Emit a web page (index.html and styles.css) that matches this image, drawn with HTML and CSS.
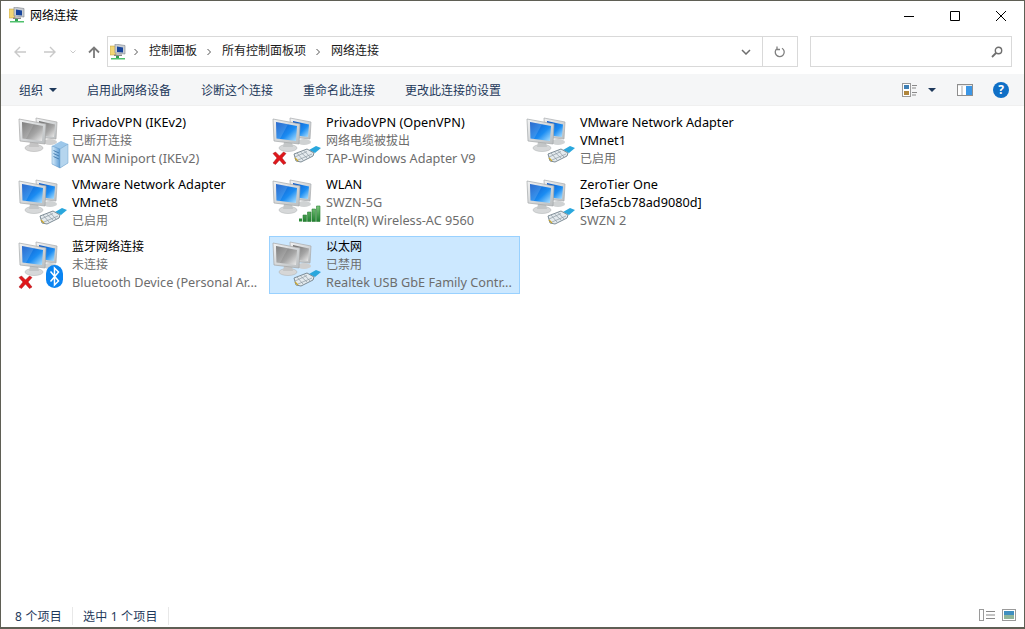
FILE: index.html
```html
<!DOCTYPE html>
<html lang="zh-CN">
<head>
    <meta charset="UTF-8">
    <title>网络连接</title>
    <link rel="stylesheet" href="styles.css">
</head>
<body>
    <svg class="icon-defs" aria-hidden="true">
        <defs>
            <linearGradient id="screen-blue" x1="0" y1="0" x2="1" y2="1">
                <stop offset="0" stop-color="#0a52c4"/>
                <stop offset="0.6" stop-color="#1b8cf2"/>
                <stop offset="1" stop-color="#b4e4ff"/>
            </linearGradient>
            <linearGradient id="screen-grey" x1="0" y1="0" x2="1" y2="1">
                <stop offset="0" stop-color="#6a6a6a"/>
                <stop offset="0.6" stop-color="#a5a5a5"/>
                <stop offset="1" stop-color="#eeeeee"/>
            </linearGradient>
            <linearGradient id="frame" x1="0" y1="0" x2="1" y2="1">
                <stop offset="0" stop-color="#f2f3f4"/>
                <stop offset="1" stop-color="#b9bdbf"/>
            </linearGradient>
            <linearGradient id="server-side" x1="0" y1="0" x2="1" y2="0">
                <stop offset="0" stop-color="#d8ecfb"/>
                <stop offset="1" stop-color="#5f9ed6"/>
            </linearGradient>
            <linearGradient id="signal" x1="0" y1="0" x2="0" y2="1">
                <stop offset="0" stop-color="#7cc77c"/>
                <stop offset="1" stop-color="#1f7f2f"/>
            </linearGradient>
        </defs>
        <symbol id="monitors-blue" viewBox="0 0 57 58">
            <ellipse cx="35" cy="30" rx="7" ry="3" fill="#cfd2d3"/>
            <path d="M21 6 42 10 41 27 22 25Z" fill="url(#frame)" stroke="#a7abad" stroke-width=".7"/>
            <path d="M24 9 40 12.500 39 25 24 23Z" fill="url(#screen-blue)"/>
            <ellipse cx="19" cy="36" rx="9" ry="3.500" fill="#d6d8d9" stroke="#b4b7b8" stroke-width=".6"/>
            <path d="M15 30h8l1 5H14Z" fill="#c3c6c7"/>
            <path d="M4 7 31 12 30 32 5 29Z" fill="url(#frame)" stroke="#a3a7a9" stroke-width=".7"/>
            <path d="M7 10 28 14 27 29 7.500 26.500Z" fill="url(#screen-blue)"/>
            <path d="M7 10 19 12.200 11 27 7.500 26.500Z" fill="#fff" opacity=".14"/>
        </symbol>
        <symbol id="monitors-grey" viewBox="0 0 57 58">
            <ellipse cx="35" cy="30" rx="7" ry="3" fill="#cfcfcf"/>
            <path d="M21 6 42 10 41 27 22 25Z" fill="url(#frame)" stroke="#a9a9a9" stroke-width=".7"/>
            <path d="M24 9 40 12.500 39 25 24 23Z" fill="url(#screen-grey)"/>
            <ellipse cx="19" cy="36" rx="9" ry="3.500" fill="#d6d6d6" stroke="#b4b4b4" stroke-width=".6"/>
            <path d="M15 30h8l1 5H14Z" fill="#c4c4c4"/>
            <path d="M4 7 31 12 30 32 5 29Z" fill="url(#frame)" stroke="#a5a5a5" stroke-width=".7"/>
            <path d="M7 10 28 14 27 29 7.500 26.500Z" fill="url(#screen-grey)"/>
            <path d="M7 10 19 12.200 11 27 7.500 26.500Z" fill="#fff" opacity=".14"/>
        </symbol>
        <symbol id="badge-cable" viewBox="0 0 57 58">
            <path d="M40 38 47 34 52 36 46 41Z" fill="#2aa7dd"/>
            <path d="M25 42 38 37 45 41 44 44 32 50 27 49Z" fill="#e4eaee" stroke="#71808a" stroke-width=".9"/>
            <path d="M28 41 34 48M31.500 40 38 46M35 38.500 41 45M26 45 38 39.500M29 48 43 42" stroke="#8d9aa2" stroke-width=".7" fill="none"/>
            <path d="M26 46 29 49" stroke="#c9a52e" stroke-width="1.200"/>
        </symbol>
        <symbol id="badge-server" viewBox="0 0 57 58">
            <path d="M37 34 46 29 53 32 53 51 45 56 37 52Z" fill="#9cc7ea"/>
            <path d="M37 34 45 37 45 56 37 52Z" fill="url(#server-side)" stroke="#5e94c4" stroke-width=".5"/>
            <path d="M45 37 53 32 53 51 45 56Z" fill="#b5d5ee" stroke="#6ea0cb" stroke-width=".5"/>
            <path d="M38.500 38.500 44 41M38.500 41.500 44 44M38.500 44.500 44 47" stroke="#3c75aa" stroke-width=".9"/>
        </symbol>
        <symbol id="badge-signal" viewBox="0 0 57 58">
            <path d="M30 47.500V44.500H33V47.500Z" fill="#2b8a38"/>
            <path d="M34 47.500V41H37.500V47.500ZM38.500 47.500V38H42V47.500ZM43 47.500V35H46.500V47.500ZM47.500 47.500V32H51V47.500Z" fill="url(#signal)" stroke="#2b7f36" stroke-width=".6"/>
        </symbol>
        <symbol id="badge-error" viewBox="0 0 57 58">
            <path d="M4 41.500 6.500 40 10.500 44 14.500 40 17 41.500 13 46 17 51 14.500 52.500 10.500 48 6.500 52.500 4 51 8 46Z" fill="#e0171b" stroke="#a51216" stroke-width=".5"/>
        </symbol>
        <symbol id="badge-bluetooth" viewBox="0 0 57 58">
            <rect x="31" y="29" width="17" height="23" rx="8.500" fill="#0a84f2"/>
            <path d="M35.500 35.500 43.500 45 39.500 49V32L43.500 36 35.500 45.500" fill="none" stroke="#fff" stroke-width="1.500"/>
        </symbol>
        <symbol id="network-small" viewBox="0 0 16 16">
            <path d="M0 2h5l1 1v8H0Z" fill="#f2d675" stroke="#b99a3a" stroke-width=".5"/>
            <path d="M5 0 15 1.500V10L5 9Z" fill="#c9cdd2" stroke="#7d8389" stroke-width=".6"/>
            <path d="M7 2.500 13 3.500V8.500L7 8Z" fill="#17449b"/>
            <path d="M4 10.500h8v1.500H4Z" fill="#888"/>
            <path d="M6 12h3v2H6Z" fill="#2f9e4f"/>
            <path d="M1 14h14v1.500H1Z" fill="#4fc06c"/>
        </symbol>
    </svg>

    <div class="window">
        <div class="title-bar">
            <svg class="small-icon"><use href="#network-small"/></svg>
            <span class="title-text">网络连接</span>
            <div class="window-buttons">
                <svg class="win-btn" viewBox="0 0 46 32"><path d="M18 15.500h10" stroke="#000" fill="none"/></svg>
                <svg class="win-btn" viewBox="0 0 46 32"><path d="M18.500 10.500h9v9h-9Z" stroke="#000" fill="none"/></svg>
                <svg class="win-btn" viewBox="0 0 46 32"><path d="M18 10l10 10M28 10 18 20" stroke="#000" fill="none"/></svg>
            </div>
        </div>

        <div class="nav-bar">
            <div class="nav-buttons">
                <svg class="nav-arrow" viewBox="0 0 12 12"><path d="M6 1 1 6l5 5M1 6h11" stroke="#c9c9c9" stroke-width="1.400" fill="none"/></svg>
                <svg class="nav-arrow" viewBox="0 0 12 12"><path d="M6 1l5 5-5 5M11 6H0" stroke="#c9c9c9" stroke-width="1.400" fill="none"/></svg>
                <svg class="nav-chevron" viewBox="0 0 6 4"><path d="M.5.500 3 3 5.500.5" stroke="#c9c9c9" fill="none"/></svg>
                <svg class="nav-up" viewBox="0 0 12 12"><path d="M1 6.500 6 1.500l5 5M6 1.500V12" stroke="#7a7a7a" stroke-width="1.800" fill="none"/></svg>
            </div>
            <div class="address-box">
                <svg class="small-icon"><use href="#network-small"/></svg>
                <svg class="crumb-arrow first-arrow" viewBox="0 0 4 8"><path d="M.5 1 3.500 4 .5 7" stroke="#555" fill="none"/></svg>
                <span class="crumb">控制面板</span>
                <svg class="crumb-arrow" viewBox="0 0 4 8"><path d="M.5 1 3.500 4 .5 7" stroke="#555" fill="none"/></svg>
                <span class="crumb">所有控制面板项</span>
                <svg class="crumb-arrow" viewBox="0 0 4 8"><path d="M.5 1 3.500 4 .5 7" stroke="#555" fill="none"/></svg>
                <span class="crumb">网络连接</span>
                <span class="address-spacer"></span>
                <svg class="address-drop" viewBox="0 0 10 6"><path d="M1 1l4 4 4-4" stroke="#6e6e6e" stroke-width="1.500" fill="none"/></svg>
                <div class="address-refresh">
                    <svg class="refresh-icon" viewBox="0 0 12 12"><path d="M3 2.500A4.500 4.500 0 1 0 8 2.200M3 .500V3.500H6" stroke="#808080" stroke-width="1.300" fill="none"/></svg>
                </div>
            </div>
            <div class="search-box">
                <svg class="search-icon" viewBox="0 0 12 12"><circle cx="7.500" cy="4.500" r="3.200" stroke="#6e6e6e" stroke-width="1.400" fill="none"/><path d="M5 7 1 11" stroke="#6e6e6e" stroke-width="1.800"/></svg>
            </div>
        </div>

        <div class="toolbar">
            <span class="tool tool-menu">组织<i class="caret"></i></span>
            <span class="tool">启用此网络设备</span>
            <span class="tool">诊断这个连接</span>
            <span class="tool">重命名此连接</span>
            <span class="tool">更改此连接的设置</span>
            <span class="toolbar-spacer"></span>
            <svg class="view-icon" viewBox="0 0 16 14">
                <rect x=".5" y=".5" width="8" height="13" fill="#fff" stroke="#9a9a9a"/>
                <rect x="2" y="2" width="5" height="4" fill="#3f7fb5"/>
                <rect x="2" y="8" width="5" height="4" fill="#b0863c"/>
                <path d="M10 2.500h5M10 5h4M10 9.500h5M10 12h4" stroke="#8a8a8a"/>
            </svg>
            <i class="caret view-caret"></i>
            <svg class="pane-icon" viewBox="0 0 16 12">
                <rect x=".5" y=".5" width="15" height="11" fill="#e8e8e8" stroke="#8e8e8e"/>
                <rect x="1" y="2" width="14" height="9" fill="#fff"/>
                <rect x="9" y="2" width="6" height="9" fill="#3b96e6"/>
                <path d="M5 2v9" stroke="#a9a9a9"/>
            </svg>
            <span class="help-icon">?</span>
        </div>

        <div class="content">
            <div class="item">
                <svg class="item-icon"><use href="#monitors-grey"/><use href="#badge-server"/></svg>
                <div class="item-text">
                    <div class="item-name latin">PrivadoVPN (IKEv2)</div>
                    <div class="item-info">已断开连接</div>
                    <div class="item-info latin">WAN Miniport (IKEv2)</div>
                </div>
            </div>
            <div class="item">
                <svg class="item-icon"><use href="#monitors-blue"/><use href="#badge-cable"/><use href="#badge-error"/></svg>
                <div class="item-text">
                    <div class="item-name latin">PrivadoVPN (OpenVPN)</div>
                    <div class="item-info">网络电缆被拔出</div>
                    <div class="item-info latin">TAP-Windows Adapter V9</div>
                </div>
            </div>
            <div class="item">
                <svg class="item-icon"><use href="#monitors-blue"/><use href="#badge-cable"/></svg>
                <div class="item-text">
                    <div class="item-name latin">VMware Network Adapter</div>
                    <div class="item-name latin">VMnet1</div>
                    <div class="item-info">已启用</div>
                </div>
            </div>
            <div class="item">
                <svg class="item-icon"><use href="#monitors-blue"/><use href="#badge-cable"/></svg>
                <div class="item-text">
                    <div class="item-name latin">VMware Network Adapter</div>
                    <div class="item-name latin">VMnet8</div>
                    <div class="item-info">已启用</div>
                </div>
            </div>
            <div class="item">
                <svg class="item-icon"><use href="#monitors-blue"/><use href="#badge-signal"/></svg>
                <div class="item-text">
                    <div class="item-name latin">WLAN</div>
                    <div class="item-info latin">SWZN-5G</div>
                    <div class="item-info latin">Intel(R) Wireless-AC 9560</div>
                </div>
            </div>
            <div class="item">
                <svg class="item-icon"><use href="#monitors-blue"/><use href="#badge-cable"/></svg>
                <div class="item-text">
                    <div class="item-name latin">ZeroTier One</div>
                    <div class="item-name latin">[3efa5cb78ad9080d]</div>
                    <div class="item-info latin">SWZN 2</div>
                </div>
            </div>
            <div class="item">
                <svg class="item-icon"><use href="#monitors-blue"/><use href="#badge-bluetooth"/><use href="#badge-error"/></svg>
                <div class="item-text">
                    <div class="item-name">蓝牙网络连接</div>
                    <div class="item-info">未连接</div>
                    <div class="item-info latin">Bluetooth Device (Personal Ar...</div>
                </div>
            </div>
            <div class="item selected">
                <svg class="item-icon"><use href="#monitors-grey"/><use href="#badge-cable"/></svg>
                <div class="item-text">
                    <div class="item-name">以太网</div>
                    <div class="item-info">已禁用</div>
                    <div class="item-info latin">Realtek USB GbE Family Contr...</div>
                </div>
            </div>
        </div>

        <div class="status-bar">
            <span class="status-cell first-cell">8 个项目</span>
            <span class="status-cell">选中 1 个项目</span>
            <span class="status-spacer"></span>
            <svg class="status-details" viewBox="0 0 16 12">
                <rect x=".5" y=".5" width="4" height="11" fill="#fff" stroke="#9a9a9a"/>
                <path d="M7 2.500h9M7 6h9M7 9.500h9" stroke="#8a8a8a" stroke-width="1.200"/>
            </svg>
            <svg class="status-large" viewBox="0 0 14 12">
                <rect x=".5" y=".5" width="13" height="11" fill="#fff" stroke="#9a9a9a"/>
                <rect x="2" y="2" width="10" height="4" fill="#3f8fc0"/>
                <rect x="2" y="6" width="10" height="4" fill="#8fb59a"/>
            </svg>
        </div>
    </div>
</body>
</html>
```

FILE: styles.css
```css
/* Base Styles */
html, body {
    margin: 0;
    padding: 0;
    height: 100%;
    background-color: #fff;
    font-family: "Noto Sans", "Noto Sans CJK SC", sans-serif;
    font-size: 12px;
    overflow: hidden;
}

.icon-defs {
    display: block;
    width: 0;
    height: 0;
}

.window {
    height: 100%;
    box-sizing: border-box;
    border: 1px solid #5f5f55;
    border-bottom-width: 2px;
    display: flex;
    flex-direction: column;
}

.small-icon {
    width: 16px;
    height: 16px;
    flex: none;
}

/* Title bar */
.title-bar {
    height: 32px;
    flex: none;
    display: flex;
    align-items: flex-start;
    padding-left: 8px;
    color: #000;
}

.title-bar .small-icon {
    margin-top: 6px;
}

.title-text {
    margin-left: 5px;
    margin-top: 7px;
    line-height: 16px;
}

.window-buttons {
    margin-left: auto;
    display: flex;
}

.win-btn {
    width: 46px;
    height: 32px;
}

/* Address row */
.nav-bar {
    height: 41px;
    flex: none;
    display: flex;
    align-items: flex-start;
    padding-top: 3px;
    box-sizing: border-box;
}

.nav-buttons {
    width: 106px;
    height: 31px;
    flex: none;
    display: flex;
    align-items: center;
    padding-left: 13px;
    box-sizing: border-box;
}

.nav-arrow {
    width: 12px;
    height: 12px;
    margin-right: 18px;
}

.nav-chevron {
    width: 6px;
    height: 4px;
    margin-left: -4px;
    margin-right: 12px;
}

.nav-up {
    width: 12px;
    height: 14px;
}

.address-box {
    width: 691px;
    height: 31px;
    box-sizing: border-box;
    border: 1px solid #d9d9d9;
    display: flex;
    align-items: center;
    padding-left: 2px;
    flex: none;
}

.crumb-arrow {
    width: 4px;
    height: 8px;
    margin: 0 11px 0 10px;
    flex: none;
}

.first-arrow {
    margin-left: 8px;
}

.crumb {
    color: #1a1a1a;
    margin-bottom: 3px;
}

.address-spacer {
    flex: 1;
}

.address-drop {
    width: 10px;
    height: 6px;
    margin-right: 11px;
}

.address-refresh {
    width: 34px;
    height: 100%;
    border-left: 1px solid #d9d9d9;
    display: flex;
    align-items: center;
    justify-content: center;
}

.refresh-icon {
    width: 12px;
    height: 12px;
}

.search-box {
    width: 202px;
    height: 31px;
    margin-left: 12px;
    box-sizing: border-box;
    border: 1px solid #d9d9d9;
    display: flex;
    align-items: center;
    justify-content: flex-end;
    padding-right: 8px;
    flex: none;
}

.search-icon {
    width: 12px;
    height: 12px;
}

/* Command bar */
.toolbar {
    height: 32px;
    flex: none;
    background-color: #f5f6f7;
    display: flex;
    align-items: center;
    padding-left: 18px;
    color: #1e395b;
    box-sizing: border-box;
    border-bottom: 1px solid #f0f0f0;
}

.tool {
    margin-right: 30px;
}

.tool-menu {
    display: flex;
    align-items: center;
}

.caret {
    width: 0;
    height: 0;
    border-left: 4px solid transparent;
    border-right: 4px solid transparent;
    border-top: 4px solid #1e395b;
    margin-left: 6px;
    display: inline-block;
}

.toolbar-spacer {
    flex: 1;
}

.view-icon {
    width: 16px;
    height: 14px;
}

.view-caret {
    margin: 0 21px 0 10px;
}

.pane-icon {
    width: 16px;
    height: 12px;
    margin-right: 20px;
}

.help-icon {
    width: 16px;
    height: 16px;
    margin-right: 15px;
    border-radius: 50%;
    background-color: #0f6fc6;
    color: #fff;
    font-weight: bold;
    line-height: 16px;
    text-align: center;
}

/* File list */
.content {
    flex: 1;
    display: grid;
    grid-template-columns: repeat(3, 251px);
    grid-auto-rows: 58px;
    column-gap: 3px;
    row-gap: 4px;
    align-content: start;
    padding: 6px 0 0 14px;
}

.item {
    display: flex;
    align-items: center;
    box-sizing: border-box;
    min-width: 0;
}

.item.selected {
    background-color: #cce8ff;
    outline: 1px solid #99d1ff;
    outline-offset: -1px;
}

.item-icon {
    width: 57px;
    height: 58px;
    flex: none;
}

.item-icon use {
    width: 57px;
    height: 58px;
}

.item-text {
    min-width: 0;
    flex: 1;
}

.item-name,
.item-info {
    line-height: 18px;
    white-space: nowrap;
}

.item-name {
    color: #000;
}

.item-info {
    color: #6d6d6d;
}

/* Latin rows come out a touch small and low next to the CJK ones */
.latin {
    font-size: 12.7px;
    margin-top: -1px;
    margin-bottom: 1px;
}

/* Status bar */
.status-bar {
    height: 24px;
    flex: none;
    display: flex;
    align-items: center;
    padding-left: 14px;
    color: #1e395b;
}

.status-cell {
    padding-right: 10px;
    margin-right: 10px;
    margin-top: 2px;
    border-right: 1px solid #e8e8e8;
    letter-spacing: .2px;
}

.status-spacer {
    flex: 1;
}

.status-details {
    width: 16px;
    height: 12px;
}

.status-large {
    width: 14px;
    height: 12px;
    margin: 0 8px 0 7px;
}
```
